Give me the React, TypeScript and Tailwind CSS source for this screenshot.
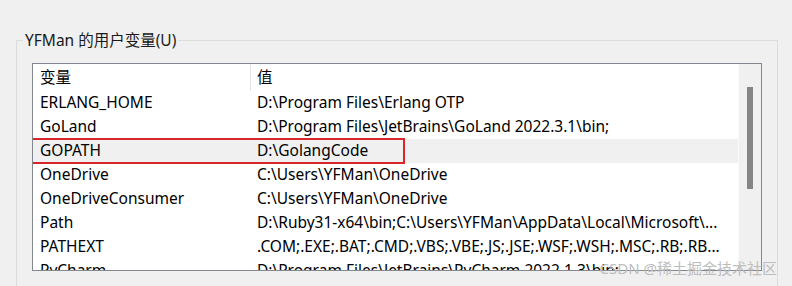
const rows = [
  { name: 'ERLANG_HOME', value: 'D:\\Program Files\\Erlang OTP' },
  { name: 'GoLand', value: 'D:\\Program Files\\JetBrains\\GoLand 2022.3.1\\bin;' },
  { name: 'GOPATH', value: 'D:\\GolangCode', selected: true },
  { name: 'OneDrive', value: 'C:\\Users\\YFMan\\OneDrive' },
  { name: 'OneDriveConsumer', value: 'C:\\Users\\YFMan\\OneDrive' },
  { name: 'Path', value: 'D:\\Ruby31-x64\\bin;C:\\Users\\YFMan\\AppData\\Local\\Microsoft\\...' },
  { name: 'PATHEXT', value: '.COM;.EXE;.BAT;.CMD;.VBS;.VBE;.JS;.JSE;.WSF;.WSH;.MSC;.RB;.RB...' },
  { name: 'PyCharm', value: 'D:\\Program Files\\JetBrains\\PyCharm 2022.1.3\\bin;' },
]

export default function App() {
  return (
    <div
      className="relative w-[792px] h-[286px] overflow-hidden bg-[#f0f0f0] pt-[40px] pl-[16px] text-[15.5px] text-black"
      style={{ fontFamily: '"Noto Sans", "Noto Sans CJK SC", sans-serif' }}
    >
      {/* Group box */}
      <div className="relative w-[762px] h-[300px] border border-[#dcdcdc] pt-[22px] pl-[15px]">
        <div className="absolute left-[6px] top-[-12px] bg-[#f0f0f0] px-[2px] leading-[22px] text-[#1a1a1a]">
          YFMan 的用户变量(U)
        </div>

        {/* List view */}
        <div className="flex w-[730px] h-[208px] border border-[#828790] bg-white overflow-hidden">
          <div className="flex-1 flex flex-col">
            {/* Header */}
            <div className="flex shrink-0 h-[27px] items-center">
              <div className="w-[218px] pl-[7px] h-full flex items-center border-r border-[#e5e5e5]">变量</div>
              <div className="pl-[6px]">值</div>
            </div>
            {rows.map((r) => (
              <div
                key={r.name}
                className={`relative flex shrink-0 h-[24px] items-center whitespace-nowrap ${r.selected ? 'bg-[#f0f0f0]' : ''}`}
              >
                <div className="w-[219px] pl-[7px]">{r.name}</div>
                <div className="pl-[5px]">{r.value}</div>
                {r.selected && (
                  <div className="absolute left-[-6px] top-[-1px] w-[378px] h-[26px] border-2 border-[#d9262b]" />
                )}
              </div>
            ))}
          </div>

          {/* Scrollbar */}
          <div className="w-[23px] h-full bg-[#f0f0f0] border-l border-[#fafafa] pt-[23px] flex justify-center">
            <div className="w-[6px] h-[102px] bg-[#858585]" />
          </div>
        </div>
      </div>

      {/* Watermark */}
      <div className="absolute right-[15px] bottom-[7px] text-[15px] leading-[22px] text-[#bdbdbd] whitespace-nowrap">
        CSDN @稀土掘金技术社区
      </div>
    </div>
  )
}
